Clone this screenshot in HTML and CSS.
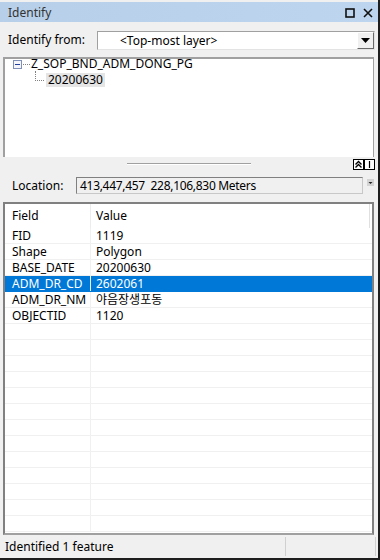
FILE: index.html
```html
<!DOCTYPE html>
<html lang="ko">
<head>
    <meta charset="UTF-8">
    <title>Identify</title>
    <link rel="stylesheet" href="styles.css">
</head>
<body>
    <div class="window">
        <div class="titlebar">
            <span class="title">Identify</span>
            <span class="title-btns">
                <svg width="10" height="10" viewBox="0 0 10 10"><rect x="1" y="1" width="8" height="8" fill="none" stroke="#111" stroke-width="1.6"/></svg>
                <svg width="10" height="10" viewBox="0 0 10 10"><path d="M1 1L9 9M9 1L1 9" stroke="#111" stroke-width="1.6"/></svg>
            </span>
        </div>

        <div class="from-row">
            <span class="label">Identify from:</span>
            <div class="combo">
                <span class="combo-text">&lt;Top-most layer&gt;</span>
                <span class="combo-btn"><svg width="9" height="5" viewBox="0 0 9 5"><path d="M0 0H9L4.5 5Z" fill="#000"/></svg></span>
            </div>
        </div>

        <div class="tree">
            <div class="node">
                <span class="toggle"><span class="minus"></span></span>
                <span class="dots-h"></span>
                <span class="node-text">Z_SOP_BND_ADM_DONG_PG</span>
            </div>
            <div class="node">
                <span class="elbow"></span>
                <span class="node-text picked">20200630</span>
            </div>
        </div>

        <div class="splitter">
            <span class="grip"></span>
            <span class="small-btns">
                <span class="sbtn"><svg width="9" height="9" viewBox="0 0 9 9"><path d="M1.5 4.5L4.5 1.5L7.5 4.5M1.5 7.5L4.5 4.5L7.5 7.5" fill="none" stroke="#000" stroke-width="1.4"/></svg></span>
                <span class="sbtn"><svg width="9" height="9" viewBox="0 0 9 9"><path d="M4.5 1V8" stroke="#000" stroke-width="1.2"/></svg></span>
            </span>
        </div>

        <div class="loc-row">
            <span class="label">Location:</span>
            <div class="loc-box">413,447,457&nbsp;&nbsp;228,106,830 Meters</div>
            <span class="loc-drop"><svg width="7" height="7" viewBox="0 0 7 7"><rect width="7" height="7" fill="#d4d4d4"/><path d="M1.5 3H5.5L3.5 5Z" fill="#222"/></svg></span>
        </div>

        <div class="grid">
            <div class="row head">
                <div class="cell c1">Field</div>
                <div class="cell c2">Value</div>
            </div>
            <div id="rows"></div>
        </div>

        <div class="status">
            <span class="status-text">Identified 1 feature</span>
            <span class="status-pane"></span>
        </div>
    </div>

    <script>
        // 속성 목록
        const attrs = [
            ["FID", "1119"],
            ["Shape", "Polygon"],
            ["BASE_DATE", "20200630"],
            ["ADM_DR_CD", "2602061"],
            ["ADM_DR_NM", "야음장생포동"],
            ["OBJECTID", "1120"]
        ];
        const selected = 3;
        const totalRows = 19;

        const box = document.getElementById("rows");
        for (let i = 0; i < totalRows; i++) {
            const r = attrs[i] || ["", ""];
            const row = document.createElement("div");
            row.className = "row" + (i === selected ? " sel" : "");
            row.innerHTML = '<div class="cell c1">' + r[0] + '</div><div class="cell c2">' + r[1] + '</div>';
            box.appendChild(row);
        }
    </script>
</body>
</html>
```

FILE: styles.css
```css
* {
    box-sizing: border-box;
}
body {
    margin: 0;
    font-family: "Noto Sans", "Noto Sans CJK KR", sans-serif;
    font-size: 12px;
    color: #000;
    background: #f0f0f0;
}
.window {
    width: 380px;
    height: 560px;
    background: #f0f0f0;
    border-right: 2px solid #1e1e1e;
    border-bottom: 2px solid #1e1e1e;
    display: flex;
    flex-direction: column;
    padding-top: 2px;
}
.titlebar {
    height: 20px;
    background: linear-gradient(to right, #b7cfe8, #bdd5ee);
    display: flex;
    align-items: center;
    justify-content: space-between;
    padding: 0 5px 0 8px;
}
.title {
    color: #333;
}
.title-btns {
    display: flex;
    gap: 8px;
    margin-top: 2px;
}
.from-row {
    display: flex;
    align-items: center;
    height: 35px;
    padding: 0 3px 0 8px;
}
.label {
    white-space: nowrap;
}
.from-row .label {
    width: 89px;
}
.combo {
    flex: 1;
    height: 19px;
    margin-top: 1px;
    background: #fff;
    border-top: 1px solid #a0a0a0;
    border-left: 1px solid #a0a0a0;
    border-bottom: 1px solid #e3e3e3;
    border-right: 1px solid #e3e3e3;
    display: flex;
    align-items: center;
}
.combo-text {
    flex: 1;
    padding-left: 22px;
}
.combo-btn {
    width: 17px;
    height: 17px;
    background: #f0f0f0;
    border-right: 1px solid #696969;
    border-bottom: 1px solid #696969;
    border-top: 1px solid #fff;
    border-left: 1px solid #fff;
    display: flex;
    align-items: center;
    justify-content: center;
}
.tree {
    height: 100px;
    margin: 0 4px 0 3px;
    background: #fff;
    border-top: 2px solid #a0a0a0;
    border-left: 2px solid #a0a0a0;
    border-right: 1px solid #a0a0a0;
}
.node {
    display: flex;
    align-items: center;
    height: 16px;
}
.node:first-child {
    margin-top: -3px;
}
.toggle {
    width: 9px;
    height: 9px;
    margin-left: 8px;
    border: 1px solid #8090b8;
    background: #f4f6fb;
    display: flex;
    align-items: center;
    justify-content: center;
}
.minus {
    width: 5px;
    height: 1px;
    background: #2040a0;
}
.dots-h {
    width: 7px;
    margin-left: 1px;
    border-top: 1px dotted #808080;
}
.node-text {
    padding: 0 2px 0 1px;
    line-height: 16px;
}
.elbow {
    width: 9px;
    height: 10px;
    margin-left: 30px;
    margin-top: -8px;
    border-left: 1px dotted #808080;
    border-bottom: 1px dotted #808080;
}
.picked {
    background: #e5e5e5;
    margin-left: 2px;
    padding: 0 2px;
    line-height: 14px;
}
.splitter {
    height: 14px;
    display: flex;
    align-items: center;
}
.grip {
    width: 124px;
    margin-left: 127px;
    border-top: 1px solid #a0a0a0;
    border-bottom: 1px solid #fff;
}
.small-btns {
    display: flex;
    margin-left: auto;
    margin-right: 3px;
}
.sbtn {
    width: 11px;
    height: 11px;
    background: #fff;
    border: 1px solid #000;
    display: flex;
    align-items: center;
    justify-content: center;
}
.loc-row {
    height: 29px;
    display: flex;
    align-items: center;
    padding-left: 12px;
}
.loc-row .label {
    width: 64px;
}
.loc-box {
    width: 287px;
    height: 17px;
    border-top: 1px solid #808080;
    border-left: 1px solid #808080;
    border-right: 1px solid #c8c8c8;
    border-bottom: 1px solid #c8c8c8;
    background: #f0f0f0;
    padding-left: 3px;
    line-height: 15px;
    letter-spacing: -0.3px;
}
.loc-drop {
    margin-left: 4px;
    margin-top: -7px;
    display: flex;
}
.grid {
    height: 333px;
    margin: 2px 4px 0 3px;
    background: #fff;
    border: 2px solid #808080;
    border-bottom-color: #a0a0a0;
    overflow: hidden;
}
.row {
    display: flex;
    height: 16px;
    border-bottom: 1px solid #f0f0f0;
}
.row.head {
    height: 24px;
    border-bottom: none;
    align-items: center;
}
.cell {
    line-height: 15px;
    white-space: nowrap;
}
.c1 {
    width: 86px;
    padding-left: 7px;
    border-right: 1px solid #f0f0f0;
}
.c2 {
    flex: 1;
    padding-left: 5px;
}
.head .c1 {
    height: 24px;
    line-height: 24px;
    border-right: 1px solid #ececec;
}
.head .c2 {
    height: 24px;
    line-height: 24px;
    border-right: 1px solid #e0e0e0;
    margin-right: 2px;
}
.row.sel .c1,
.row.sel .c2 {
    background: #0078d7;
    color: #fff;
}
.row.sel {
    border-bottom-color: #0078d7;
}
.status {
    flex: 1;
    display: flex;
    align-items: center;
    padding-left: 5px;
}
.status-text {
    width: 281px;
    border-right: 1px solid #d0d0d0;
    height: 19px;
    line-height: 19px;
}
.status-pane {
    width: 90px;
    height: 19px;
    border-right: 1px solid #d0d0d0;
}
```
